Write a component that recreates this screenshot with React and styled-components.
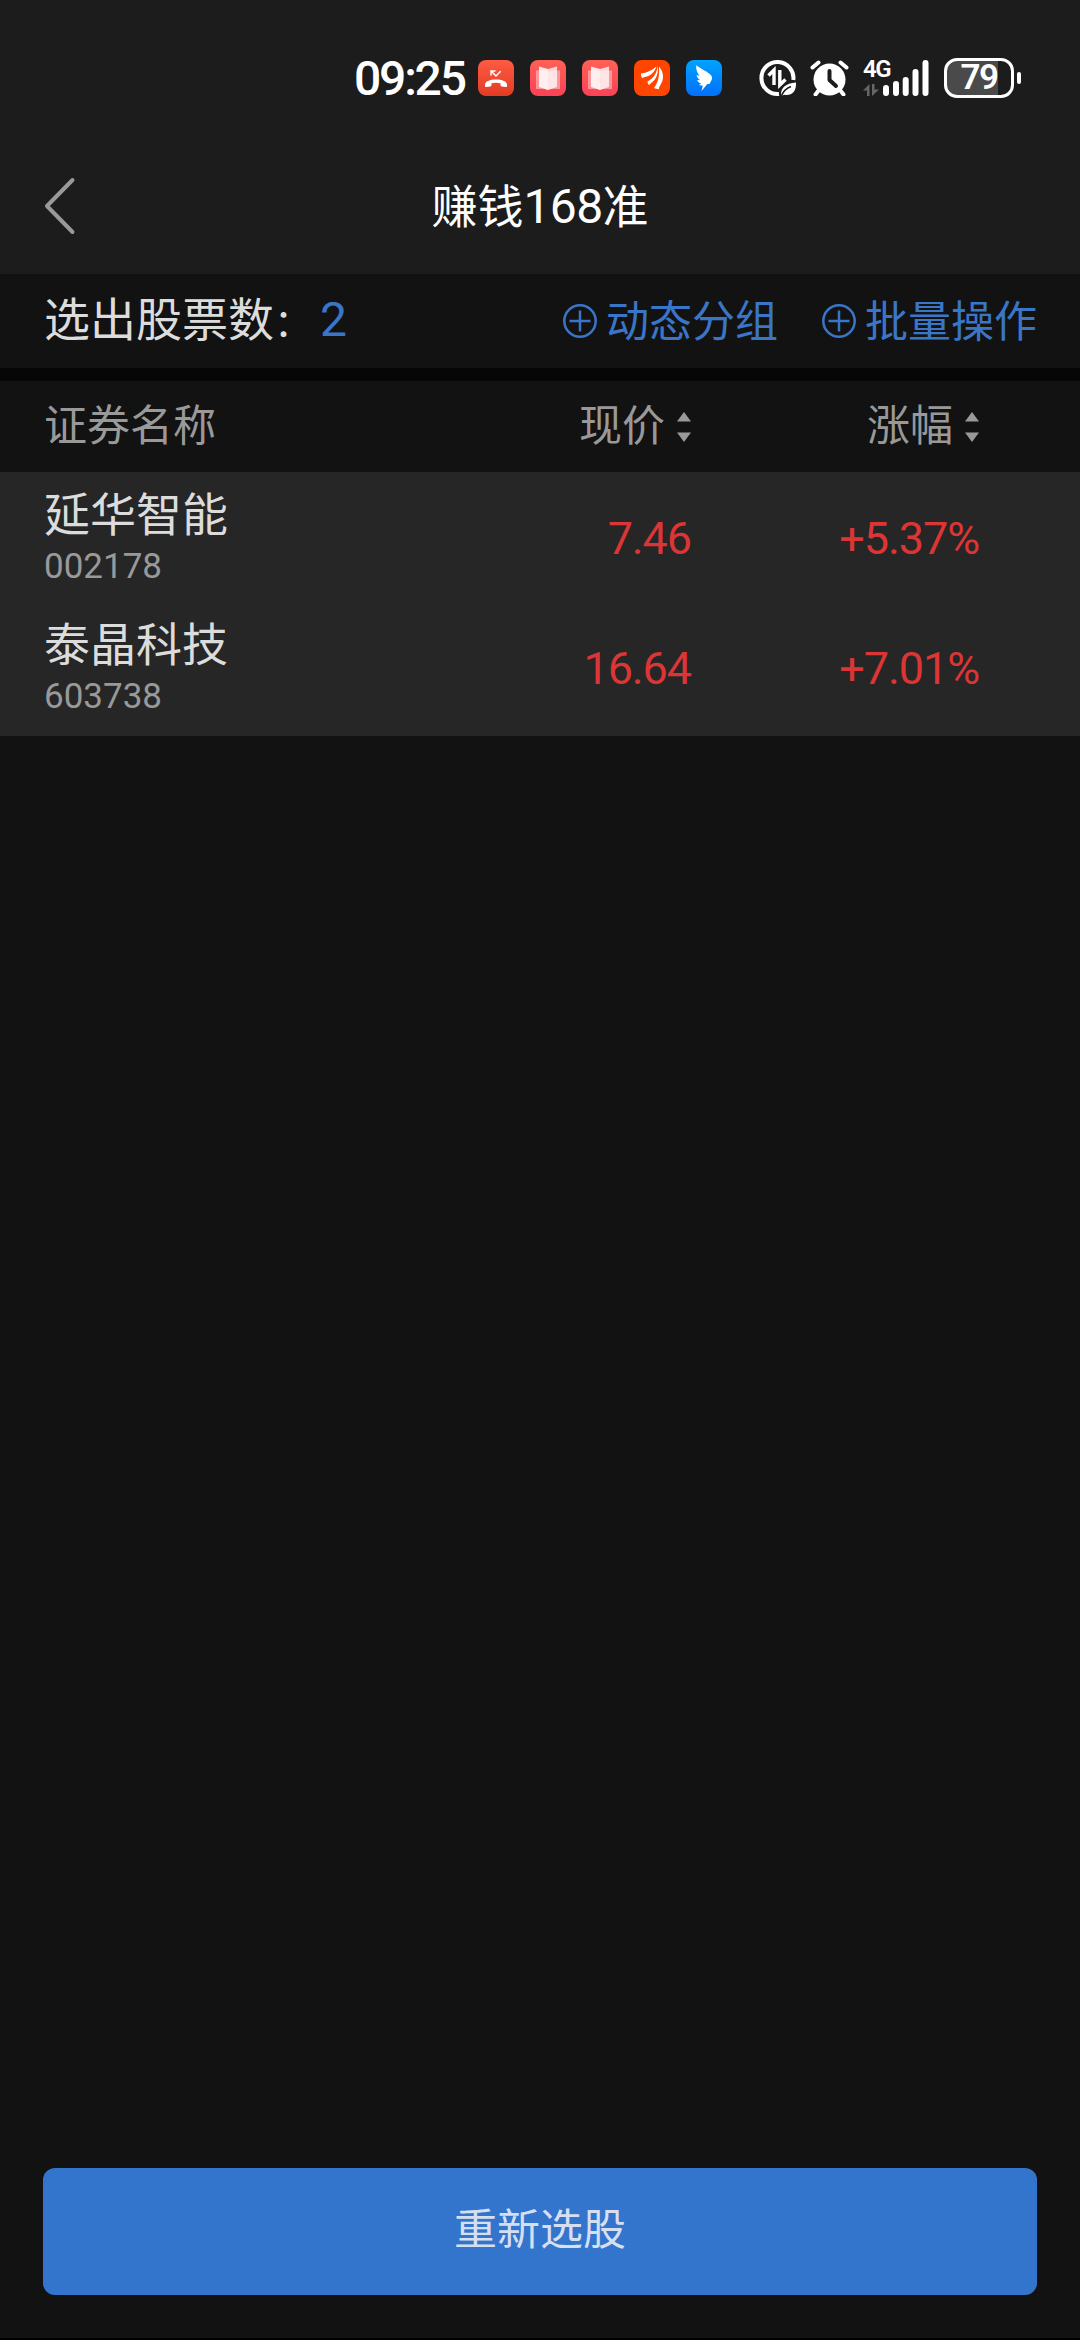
import React from "react";
import styled, { createGlobalStyle } from "styled-components";

const GlobalStyle = createGlobalStyle`
  * {
    box-sizing: border-box;
  }

  body {
    margin: 0;
    background: #121212;
    font-family: "Noto Sans CJK SC", sans-serif;
  }

  svg {
    display: block;
    flex-shrink: 0;
  }
`;

const Screen = styled.div`
  display: flex;
  flex-direction: column;
  width: 1080px;
  height: 2340px;
  background: #121212;
  border-bottom: 2px solid #000;
`;

const StatusBar = styled.div`
  display: flex;
  align-items: center;
  height: 120px;
  padding: 36px 0 0 354px;
  background: #1c1c1c;
`;

const Time = styled.span`
  width: 124px;
  padding-top: 1px;
  font-family: Roboto, sans-serif;
  font-size: 48px;
  font-weight: 500;
  line-height: 56px;
  letter-spacing: -2.2px;
  color: #fff;
`;

const AppIcons = styled.div`
  display: flex;
  gap: 16px;
  margin-right: 37px;
`;

const SystemIcons = styled.div`
  display: flex;
  align-items: center;
  gap: 14px;
`;

const Signal = styled.div`
  display: flex;
  align-items: flex-end;
  width: 67px;
  height: 36px;
`;

const Network = styled.div`
  display: flex;
  flex-direction: column;
  justify-content: space-between;
  width: 20px;
  height: 36px;
`;

const NetworkType = styled.span`
  font-family: Roboto, sans-serif;
  font-size: 24px;
  font-weight: 600;
  line-height: 19px;
  letter-spacing: -1.5px;
  white-space: nowrap;
  color: #fff;
`;

const Battery = styled.div`
  display: flex;
  align-items: center;
  gap: 3px;
`;

const BatteryBody = styled.div`
  display: flex;
  align-items: center;
  justify-content: center;
  width: 70px;
  height: 40px;
  border: 3px solid #fff;
  border-radius: 13px;
  background: linear-gradient(to right, #4a4a4a 51px, #1c1c1c 51px);
  font-family: Roboto, sans-serif;
  font-size: 35px;
  font-weight: 600;
  line-height: 36px;
  letter-spacing: -1.5px;
  color: #fff;
`;

const BatteryTip = styled.div`
  width: 4px;
  height: 12px;
  border-radius: 2px;
  background: #fff;
`;

const Header = styled.header`
  display: grid;
  grid-template-columns: 1fr auto 1fr;
  align-items: center;
  height: 154px;
  padding: 18px 44px 0;
  background: #1c1c1c;
`;

const Title = styled.h1`
  margin: 0;
  padding-bottom: 3px;
  font-size: 46px;
  font-weight: 400;
  line-height: 60px;
  color: #fff;
`;

const TitleNumber = styled.span`
  font-family: Roboto, sans-serif;
  font-size: 48px;
  letter-spacing: -0.7px;
`;

const Toolbar = styled.div`
  display: flex;
  align-items: center;
  justify-content: space-between;
  height: 107px;
  padding: 0 43px 6px 44px;
  border-bottom: 13px solid #060606;
`;

const Summary = styled.div`
  font-size: 46px;
  line-height: 60px;
  color: #dcdcdc;
`;

const Colon = styled.span`
  margin-right: 8px;
  font-size: 38px;
`;

const Count = styled.span`
  font-family: Roboto, sans-serif;
  font-size: 48px;
  color: #3a76c8;
`;

const Actions = styled.div`
  display: flex;
  gap: 44px;
`;

const Action = styled.button`
  display: flex;
  align-items: center;
  gap: 9px;
  padding: 0;
  border: 0;
  background: none;
  font-family: inherit;
  font-size: 43px;
  line-height: 60px;
  color: #3a76c8;

  svg {
    margin-top: 6px;
  }
`;

const Columns = styled.div`
  display: grid;
  grid-template-columns: 1fr 288px 288px;
  align-items: center;
  padding: 0 101px 0 44px;
`;

const TableHead = styled(Columns)`
  height: 91px;
  padding-bottom: 9px;
  font-size: 43px;
  line-height: 60px;
  color: #999;
`;

const SortableHead = styled.div`
  display: flex;
  align-items: center;
  justify-content: flex-end;
  gap: 12px;

  svg {
    margin-top: 9px;
  }
`;

const Rows = styled.div`
  padding-bottom: 4px;
  background: #262626;
`;

const Row = styled(Columns)`
  height: 130px;
`;

const Stock = styled.div`
  display: flex;
  flex-direction: column;
`;

const StockName = styled.span`
  font-size: 46px;
  line-height: 60px;
  color: #dcdcdc;
`;

const StockCode = styled.span`
  font-family: Roboto, sans-serif;
  font-size: 35px;
  line-height: 52px;
  color: #999;
`;

const Quote = styled.span`
  padding-top: 3px;
  font-family: Roboto, sans-serif;
  font-size: 45px;
  line-height: 60px;
  letter-spacing: -1.1px;
  text-align: right;
  color: #dc3535;
`;

const Footer = styled.footer`
  margin-top: auto;
  padding: 0 43px 43px;
`;

const PickButton = styled.button`
  width: 100%;
  height: 127px;
  padding: 0 0 11px;
  border: 0;
  border-radius: 12px;
  background: #3375cc;
  font-family: inherit;
  font-size: 43px;
  line-height: 60px;
  color: #d6dff0;
`;

const MissedCallIcon = () => (
  <svg width="36" height="36" viewBox="0 0 36 36">
    <defs>
      <linearGradient id="call" x1="0" y1="0" x2="0" y2="1">
        <stop offset="0" stopColor="#ff5a43" />
        <stop offset="1" stopColor="#e23c24" />
      </linearGradient>
    </defs>
    <rect width="36" height="36" rx="8" fill="url(#call)" />
    <path d="M13 15.500V11h4.500M13.300 11.300l4.700 4.700 4.700-4.700" fill="none" stroke="#fff" strokeWidth="1.500" />
    <path
      d="M7 24.500c0-3 5-5 11-5s11 2 11 5v1.500c0 .8-.5 1.200-1.300 1.100l-4-.7c-.8-.1-1.200-.6-1.200-1.300v-1.800c-2.700-.8-6.300-.8-9 0v1.800c0 .7-.4 1.200-1.200 1.300l-4 .7c-.8.1-1.300-.3-1.300-1.100z"
      fill="#fff"
    />
  </svg>
);

const BookIcon = () => (
  <svg width="36" height="36" viewBox="0 0 36 36">
    <defs>
      <linearGradient id="book" x1="0" y1="0" x2="0" y2="1">
        <stop offset="0" stopColor="#ff6156" />
        <stop offset="1" stopColor="#fb4256" />
      </linearGradient>
    </defs>
    <rect width="36" height="36" rx="8" fill="url(#book)" />
    <path d="M6 10.500h24V29H20l-2 1.200L16 29H6z" fill="#fff" opacity=".4" />
    <path d="M9 6.500l9 2.500v21l-9-3z" fill="#fff" opacity=".85" />
    <path d="M27 6.500L18 9v21l9-3z" fill="#fff" opacity=".75" />
  </svg>
);

const FeatherIcon = () => (
  <svg width="36" height="36" viewBox="0 0 36 36">
    <rect width="36" height="36" rx="8" fill="#ff4500" />
    <g fill="#fff">
      <path d="M7 13.500c6-.6 10.500-3 15.500-7-2 5.500-5.500 9.300-10.500 10.200-1.700.3-2.700.8-3.300 1.500C7.200 17.200 6.800 15.500 7 13.500z" />
      <path d="M13.500 21.500c5.500-3 9-7.500 10.300-15.500.9 7.500-1.600 13.500-6.600 17-1 .6-1.600 1.200-2 2-1.200-.6-1.600-2-1.700-3.500z" />
      <path d="M20 28c4-5 5.700-12 5-21.500 4.800 5.500 5.200 12.500 1.700 18-1 1.400-1.700 3-1.900 4.700-2-.1-3.400-.4-4.800-1.200z" />
    </g>
  </svg>
);

const WingIcon = () => (
  <svg width="36" height="36" viewBox="0 0 36 36">
    <defs>
      <linearGradient id="wing" x1="0" y1="0" x2="0" y2="1">
        <stop offset="0" stopColor="#00a2ff" />
        <stop offset="1" stopColor="#0070fa" />
      </linearGradient>
    </defs>
    <rect width="36" height="36" rx="8" fill="url(#wing)" />
    <path
      d="M10.200 5.200c4 3.500 9.800 5.200 13.800 9 1.900 1.700 2.600 3.300 1.800 5.200l-2.300 4.600h-2.200L15.500 31l1.300-5.300-4-.8 2.800-1.300c-2.300-.6-3.600-1.800-4.500-3.700l3.300.3c-2.100-1.200-3.400-3-3.900-5.300l3 1c-2.400-3-3.600-6.500-3.300-10.700z"
      fill="#fff"
    />
  </svg>
);

const DataSaverIcon = () => (
  <svg width="37" height="36" viewBox="0 0 37 36">
    <path
      d="M34.300 20A16 16 0 1 0 20 33.900"
      fill="none"
      stroke="#fff"
      strokeWidth="4"
    />
    <path d="M9.500 15.500l5.500-5.500v15M20.800 10v15l5.700-5.500" fill="none" stroke="#fff" strokeWidth="3.400" />
    <path d="M22 36c-.5-8 4-12.500 15-13.500.5 9-4 13.500-11.500 12.200z" fill="#fff" />
    <path d="M22.500 36c1.500-4.500 4.500-7.500 9.500-9.500" fill="none" stroke="#1c1c1c" strokeWidth="1.600" />
  </svg>
);

const AlarmIcon = () => (
  <svg width="39" height="36" viewBox="0 0 39 36">
    <circle cx="19.500" cy="19.500" r="16" fill="#fff" />
    <path d="M2.500 7.500l6-5M36.500 7.500l-6-5M9 30l-3.500 4.500M30 30l3.500 4.500" stroke="#fff" strokeWidth="4" strokeLinecap="round" />
    <path d="M19.500 11v9l6.500 6" fill="none" stroke="#1c1c1c" strokeWidth="4" strokeLinecap="round" strokeLinejoin="round" />
  </svg>
);

const DataArrows = () => (
  <svg width="16" height="12" viewBox="0 0 16 12">
    <path d="M0 6.500L6.500 0v12H4V6.500zM9 0h2.500v5.500H16L9 12z" fill="#666" />
  </svg>
);

const SignalBars = () => (
  <svg width="47" height="36" viewBox="0 0 47 36">
    <path
      d="M3 28v5M13 24v9M22.700 20v13M32.500 12v21M42.500 3v30"
      stroke="#fff"
      strokeWidth="6"
      strokeLinecap="round"
    />
  </svg>
);

const BackIcon = () => (
  <svg width="32" height="58" viewBox="0 0 32 58" fill="none">
    <path d="M28.500 3L3 29l25.500 26" stroke="#999" strokeWidth="4" strokeLinecap="round" strokeLinejoin="round" />
  </svg>
);

const PlusCircleIcon = () => (
  <svg width="34" height="34" viewBox="0 0 34 34" fill="none" stroke="#3a76c8" strokeWidth="2.500">
    <circle cx="17" cy="17" r="15.700" />
    <path d="M6.500 17h21M17 6.500v21" />
  </svg>
);

const SortIcon = () => (
  <svg width="14" height="30" viewBox="0 0 14 30" fill="#999">
    <path d="M7 0l7 9.500H0zM0 20.500h14L7 30z" />
  </svg>
);

const actions = ["动态分组", "批量操作"];

const stocks = [
  { name: "延华智能", code: "002178", price: "7.46", change: "+5.37%" },
  { name: "泰晶科技", code: "603738", price: "16.64", change: "+7.01%" },
];

const App = () => {
  return (
    <>
      <GlobalStyle />
      <Screen>
        <StatusBar>
          <Time>09:25</Time>
          <AppIcons>
            <MissedCallIcon />
            <BookIcon />
            <BookIcon />
            <FeatherIcon />
            <WingIcon />
          </AppIcons>
          <SystemIcons>
            <DataSaverIcon />
            <AlarmIcon />
            <Signal>
              <Network>
                <NetworkType>4G</NetworkType>
                <DataArrows />
              </Network>
              <SignalBars />
            </Signal>
            <Battery>
              <BatteryBody>79</BatteryBody>
              <BatteryTip />
            </Battery>
          </SystemIcons>
        </StatusBar>
        <Header>
          <BackIcon />
          <Title>
            赚钱<TitleNumber>168</TitleNumber>准
          </Title>
        </Header>
        <Toolbar>
          <Summary>
            选出股票数<Colon>：</Colon>
            <Count>2</Count>
          </Summary>
          <Actions>
            {actions.map((label) => (
              <Action key={label}>
                <PlusCircleIcon />
                {label}
              </Action>
            ))}
          </Actions>
        </Toolbar>
        <TableHead>
          <span>证券名称</span>
          <SortableHead>
            现价
            <SortIcon />
          </SortableHead>
          <SortableHead>
            涨幅
            <SortIcon />
          </SortableHead>
        </TableHead>
        <Rows>
          {stocks.map((stock) => (
            <Row key={stock.code}>
              <Stock>
                <StockName>{stock.name}</StockName>
                <StockCode>{stock.code}</StockCode>
              </Stock>
              <Quote>{stock.price}</Quote>
              <Quote>{stock.change}</Quote>
            </Row>
          ))}
        </Rows>
        <Footer>
          <PickButton>重新选股</PickButton>
        </Footer>
      </Screen>
    </>
  );
};

export default App;
